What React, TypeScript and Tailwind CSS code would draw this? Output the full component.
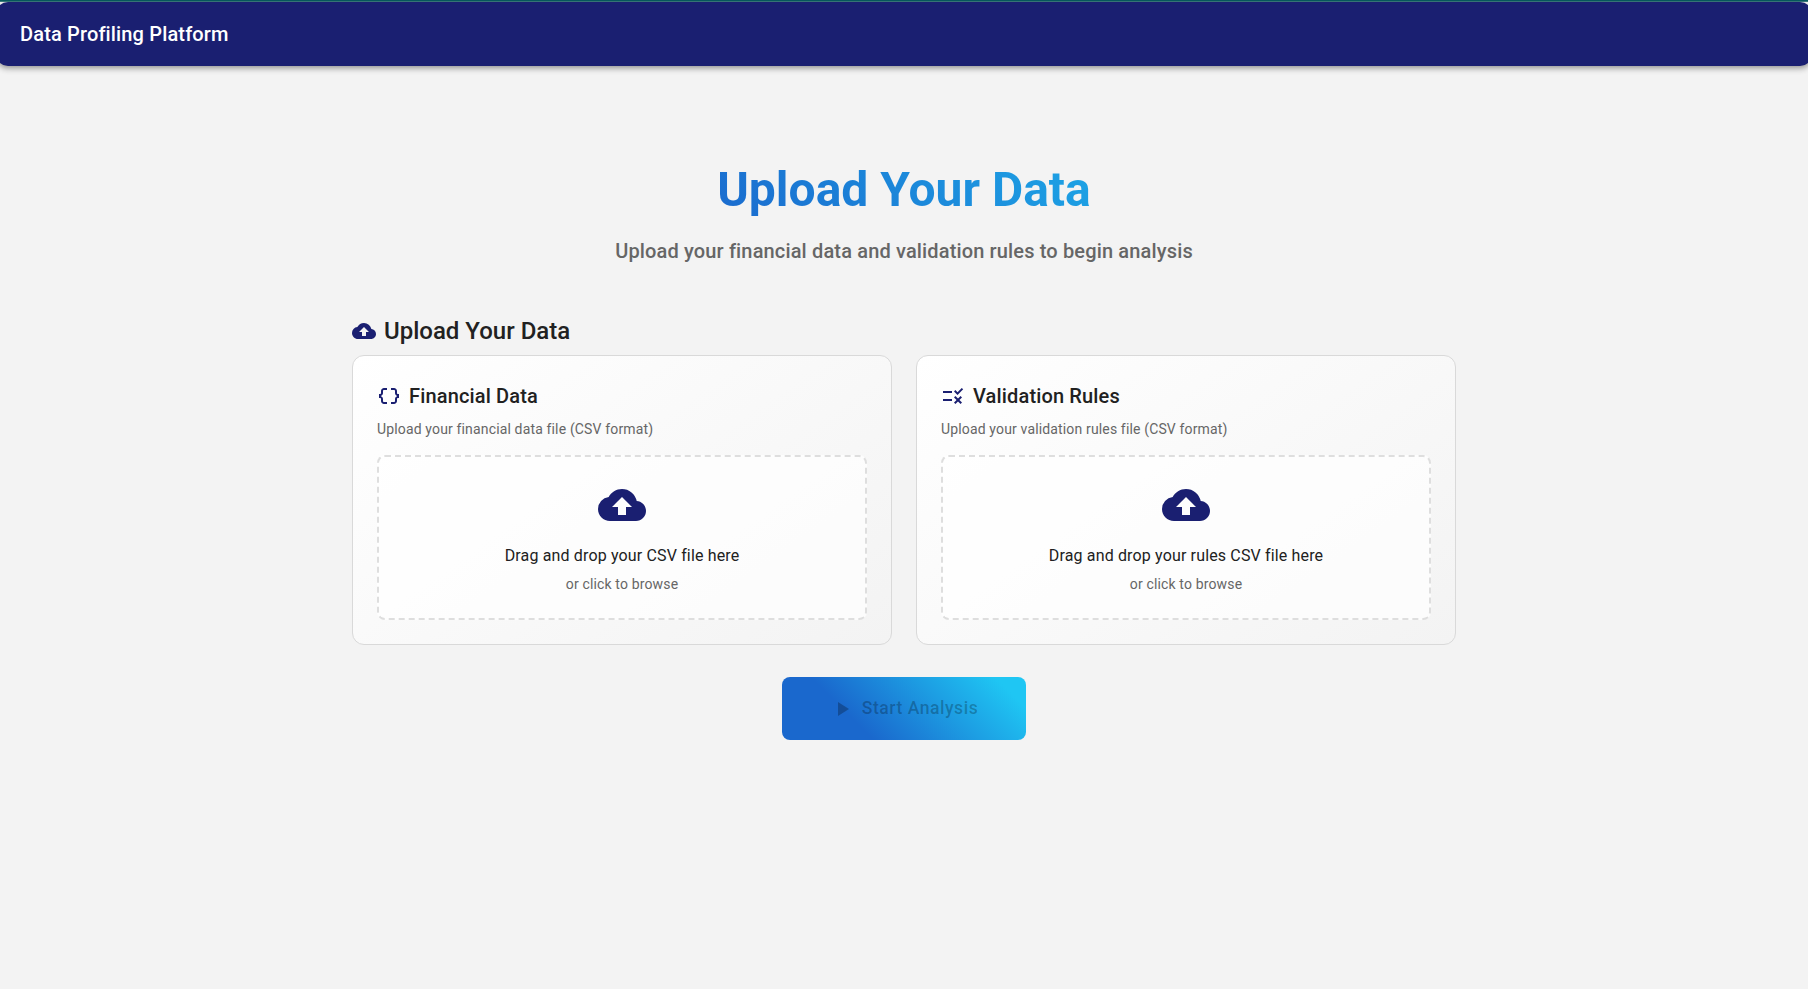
import React from "react";
import { MdCloudUpload, MdDataObject, MdPlayArrow, MdRule } from "react-icons/md";

type UploadCardProps = {
  icon: React.ReactNode;
  title: string;
  description: string;
  prompt: string;
};

function UploadCard({ icon, title, description, prompt }: UploadCardProps) {
  return (
    <section className="h-[290px] rounded-xl border border-[#d9d9d9] bg-[linear-gradient(145deg,#ffffff_0%,#f3f3f3_100%)] p-6">
      <div className="flex h-8 items-center gap-2">
        <span className="text-2xl text-[#1a1f71]">{icon}</span>
        <h3 className="text-xl leading-8 font-medium tracking-[0.0075em] text-[#212121]">{title}</h3>
      </div>
      <p className="mt-[7px] text-sm leading-5 tracking-[0.01071em] text-[#666666]">{description}</p>
      <button
        type="button"
        className="mt-4 flex h-[165px] w-full flex-col items-center rounded-lg border-2 border-dashed border-[#dedede] bg-white/70 pt-6"
      >
        <MdCloudUpload className="size-12 text-[#1a1f71]" />
        <span className="mt-[15px] text-base leading-6 tracking-[0.00938em] text-[#212121]">{prompt}</span>
        <span className="mt-1.5 text-sm leading-5 tracking-[0.01071em] text-[#666666]">or click to browse</span>
      </button>
    </section>
  );
}

export default function App() {
  return (
    <div className="min-h-screen overflow-x-hidden bg-[#f3f3f3] font-[Roboto,sans-serif]">
      <div className="h-0.5 border-b border-[#3b7b7c] bg-[#075b60]" />
      <header className="-mx-1 flex h-16 items-center rounded-xl bg-[#1a1f71] px-6 shadow-[0_2px_4px_-1px_rgba(0,0,0,0.2),0_4px_5px_0_rgba(0,0,0,0.14),0_1px_10px_0_rgba(0,0,0,0.12)]">
        <span className="text-xl leading-8 font-medium tracking-[0.0075em] text-white">Data Profiling Platform</span>
      </header>
      <main className="mx-auto w-[1104px]">
        <div className="pt-24 text-center">
          <h1 className="bg-[linear-gradient(45deg,#1a68cd_30%,#1fc6f3_90%)] bg-clip-text text-5xl leading-[56px] font-bold text-transparent">
            Upload Your Data
          </h1>
          <p className="mt-[17px] text-xl leading-8 font-medium tracking-[0.0075em] text-[#666666]">
            Upload your financial data and validation rules to begin analysis
          </p>
        </div>
        <div className="mt-12 flex h-8 items-center gap-2">
          <MdCloudUpload className="size-6 text-[#1a1f71]" />
          <h2 className="text-2xl leading-8 font-medium text-[#212121]">Upload Your Data</h2>
        </div>
        <div className="mt-2 grid grid-cols-2 gap-6">
          <UploadCard
            icon={<MdDataObject />}
            title="Financial Data"
            description="Upload your financial data file (CSV format)"
            prompt="Drag and drop your CSV file here"
          />
          <UploadCard
            icon={<MdRule />}
            title="Validation Rules"
            description="Upload your validation rules file (CSV format)"
            prompt="Drag and drop your rules CSV file here"
          />
        </div>
        <div className="mt-8 flex justify-center">
          <button
            type="button"
            disabled
            className="flex h-[63px] w-[244px] items-center justify-center gap-2 rounded-lg bg-[linear-gradient(45deg,#1a68cd_30%,#1fc6f3_90%)] text-[17.6px] font-medium tracking-[0.02857em] text-black/26"
          >
            <MdPlayArrow className="size-6" />
            Start Analysis
          </button>
        </div>
      </main>
    </div>
  );
}
